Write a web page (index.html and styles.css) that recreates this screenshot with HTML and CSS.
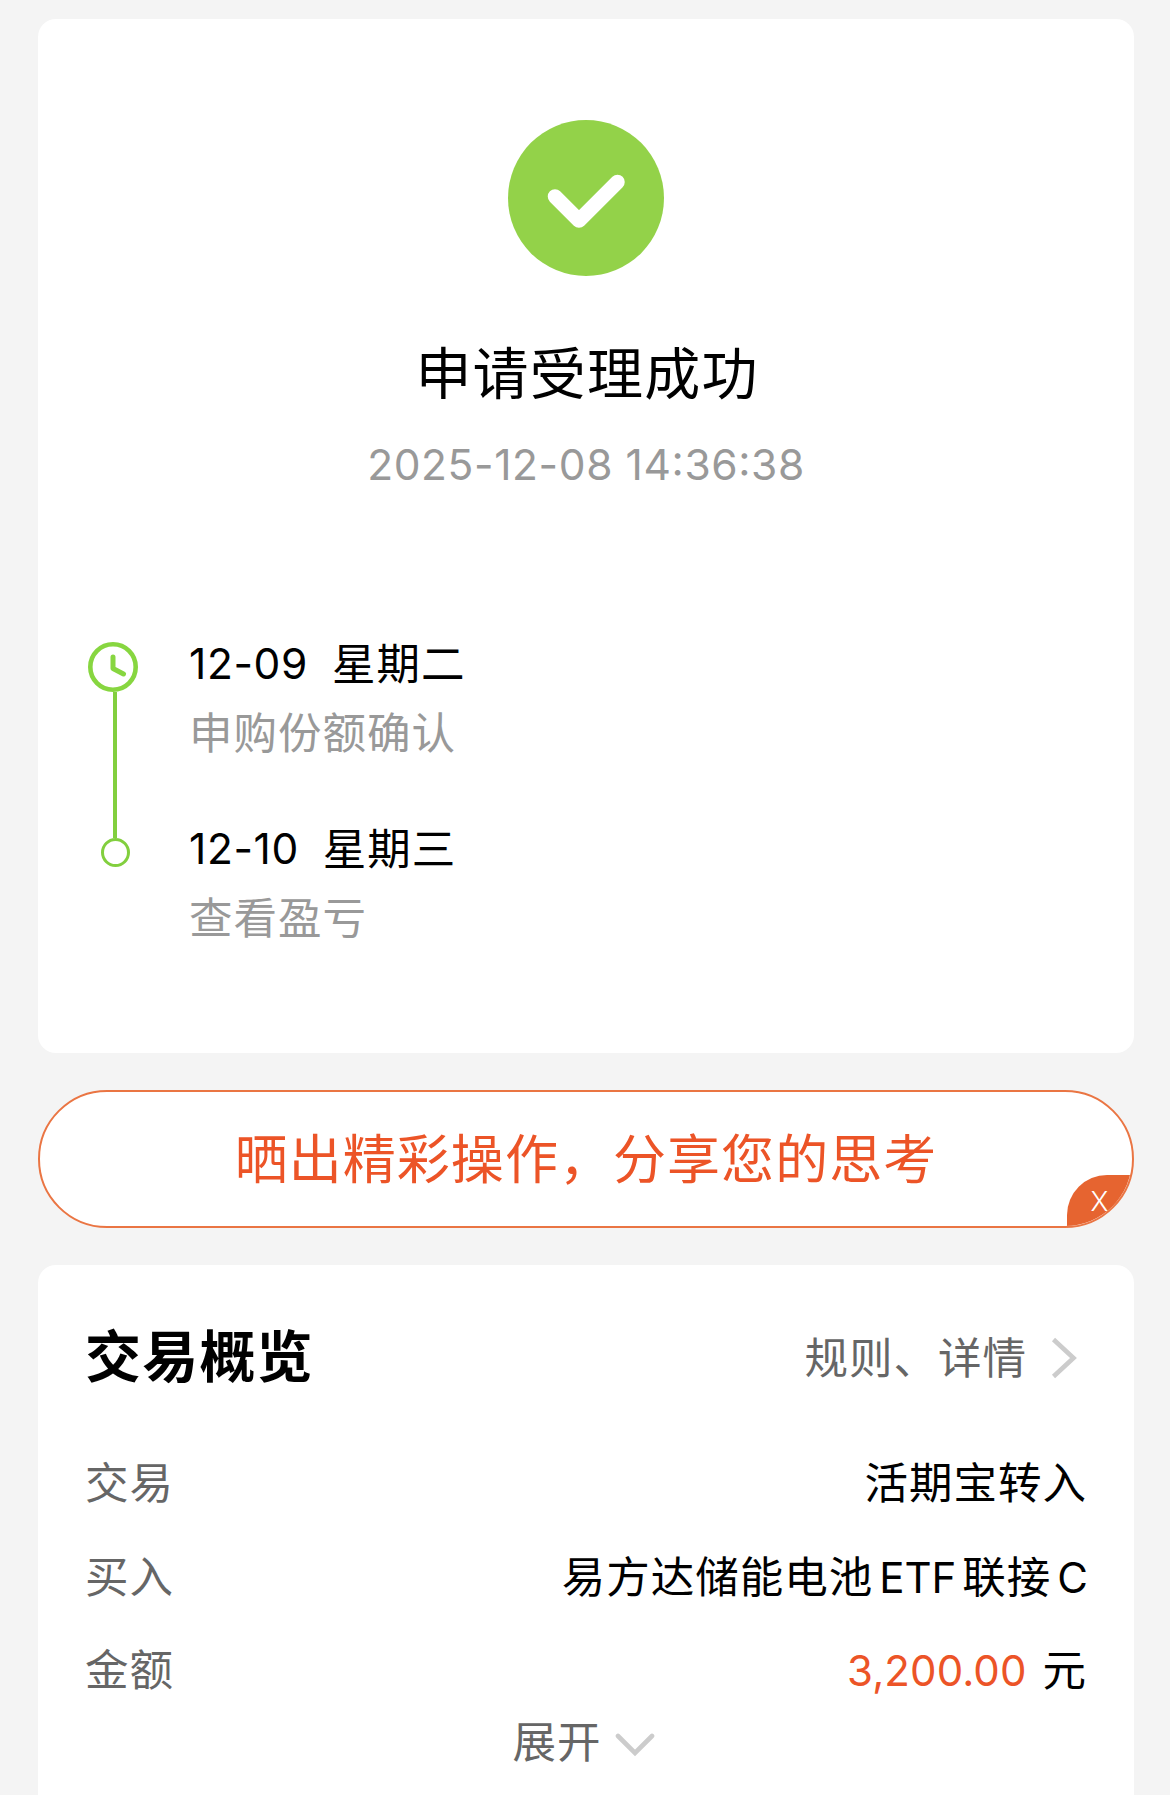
FILE: index.html
```html
<!DOCTYPE html>
<html lang="zh-CN">
<head>
<meta charset="utf-8">
<title>申请受理成功</title>
<link rel="stylesheet" href="styles.css">
</head>
<body>
<main class="page">
  <section class="card result">
    <svg class="result-icon" viewBox="0 0 156 156" aria-hidden="true">
      <circle cx="78" cy="78" r="78" fill="#93d249"/>
      <path d="M47 76.500 71 100.500 109.500 62" fill="none" stroke="#fff" stroke-width="14.500" stroke-linecap="round" stroke-linejoin="round"/>
    </svg>
    <h1 class="result-title">申请受理成功</h1>
    <p class="result-time">2025-12-08 14<span class="colon">:</span>36<span class="colon">:</span>38</p>
    <ol class="timeline">
      <li class="step">
        <div class="rail">
          <svg class="clock" viewBox="0 0 50 50" aria-hidden="true">
            <circle cx="25" cy="25" r="22.700" fill="none" stroke="#87d640" stroke-width="4.600"/>
            <path d="M25 15v11.500l10.500 5.500" fill="none" stroke="#87d640" stroke-width="5" stroke-linecap="round" stroke-linejoin="round"/>
          </svg>
          <span class="line"></span>
        </div>
        <div class="step-text">
          <p class="step-date"><span class="num">12-09</span><span>星期二</span></p>
          <p class="step-note">申购份额确认</p>
        </div>
      </li>
      <li class="step">
        <div class="rail"><span class="dot"></span></div>
        <div class="step-text">
          <p class="step-date"><span class="num">12-10</span><span>星期三</span></p>
          <p class="step-note">查看盈亏</p>
        </div>
      </li>
    </ol>
  </section>

  <div class="share">
    <span class="share-text">晒出精彩操作，分享您的思考</span>
    <span class="share-close">X</span>
  </div>

  <section class="card overview">
    <header class="overview-head">
      <h2 class="overview-title">交易概览</h2>
      <a class="rules">规则、详情
        <svg class="chev-right" viewBox="0 0 26 44" aria-hidden="true"><path d="M2.500 3.500 22.500 22 2.500 40.500" fill="none" stroke="#ccc" stroke-width="4.600"/></svg>
      </a>
    </header>
    <dl class="rows">
      <div class="row"><dt>交易</dt><dd>活期宝转入</dd></div>
      <div class="row"><dt>买入</dt><dd>易方达储能电池<span class="latin">ETF</span>联接<span class="latin last">C</span></dd></div>
      <div class="row"><dt>金额</dt><dd><span class="amount">3,200.00</span>元</dd></div>
    </dl>
    <div class="expand">展开
      <svg class="chev-down" viewBox="0 0 40 24" aria-hidden="true"><path d="M3 3 20 20 37 3" fill="none" stroke="#ccc" stroke-width="4.600" stroke-linecap="round"/></svg>
    </div>
  </section>
</main>
</body>
</html>
```
FILE: styles.css
```css
* { box-sizing: border-box; margin: 0; padding: 0; }

body {
  background: #f4f4f4;
  color: #000;
  font-family: Inter, "Noto Sans CJK SC", sans-serif;
  font-size: 43.5px;
  line-height: 60px;
  letter-spacing: 1px;
}

.page {
  display: flex;
  flex-direction: column;
  height: 1795px;
  padding: 19px 36px 0 38px;
  overflow: hidden;
}

.card { flex: none; border-radius: 18px; background: #fff; }

.result {
  display: flex;
  flex-direction: column;
  align-items: center;
  height: 1034px;
  padding-top: 101px;
}

.result-icon { width: 156px; height: 156px; }

.result-title {
  margin-top: 58px;
  padding-left: 2px;
  font-size: 56px;
  font-weight: 400;
  line-height: 80px;
  letter-spacing: 1.2px;
}

.result-time {
  margin-top: 21px;
  color: #999;
  font-size: 42.5px;
  letter-spacing: 0.6px;
}

.colon { font-feature-settings: "case" 1; }

.timeline { align-self: stretch; margin-top: 139px; padding-left: 50px; list-style: none; }

.step { display: flex; gap: 51px; height: 185px; }

.rail { display: flex; flex-direction: column; align-items: center; width: 50px; padding-top: 8px; }

.clock { flex: none; width: 50px; height: 50px; }

.line { width: 4px; height: 146px; margin-left: 4px; flex: none; background: #82cf3e; }

.dot {
  width: 29px;
  height: 29px;
  margin: 11px 0 0 5px;
  border: 3px solid #82cf3e;
  border-radius: 50%;
}

.step-date { display: flex; gap: 24px; white-space: nowrap; }

.num { font-size: 42.5px; letter-spacing: 0.6px; }

.step-note { margin-top: 9px; color: #999; }

.share {
  position: relative;
  display: flex;
  flex: none;
  align-items: center;
  justify-content: center;
  height: 138px;
  margin: 37px 0;
  border: 2px solid #ea7543;
  border-radius: 69px;
  background: #fff;
  color: #ec5427;
  font-size: 53px;
  letter-spacing: 1.05px;
  overflow: hidden;
}

.share-text { padding-top: 1px; }

.share-close {
  position: absolute;
  right: -2px;
  bottom: -2px;
  width: 67px;
  height: 53px;
  padding-right: 2px;
  border-top-left-radius: 40px;
  background: #e66430;
  color: #fff;
  font-size: 27px;
  font-weight: 350;
  line-height: 53px;
  letter-spacing: 0;
  text-align: center;
}

.overview { height: 600px; padding: 52px 47px 0 47px; }

.overview-head { display: flex; justify-content: space-between; align-items: center; height: 80px; }

.overview-title { font-size: 56px; font-weight: 700; letter-spacing: 1.2px; }

.rules { display: flex; align-items: center; gap: 24px; padding: 1px 10px 0 0; color: #666; }

.chev-right { width: 26px; height: 44px; }

.rows { margin-top: 56px; }

.row { display: flex; justify-content: space-between; height: 93.5px; white-space: nowrap; }

.row dt { color: #666; }

.latin { margin: 0 6px; font-size: 42px; letter-spacing: 0; }

.latin.last { margin-right: -1px; }

.amount { margin-right: 16px; color: #ec5427; font-size: 42px; letter-spacing: 0.1px; }

.expand { display: flex; justify-content: center; align-items: center; gap: 13px; margin: -22px 5px 0 0; color: #666; }

.chev-down { width: 40px; height: 24px; margin-top: 6px; }
```
